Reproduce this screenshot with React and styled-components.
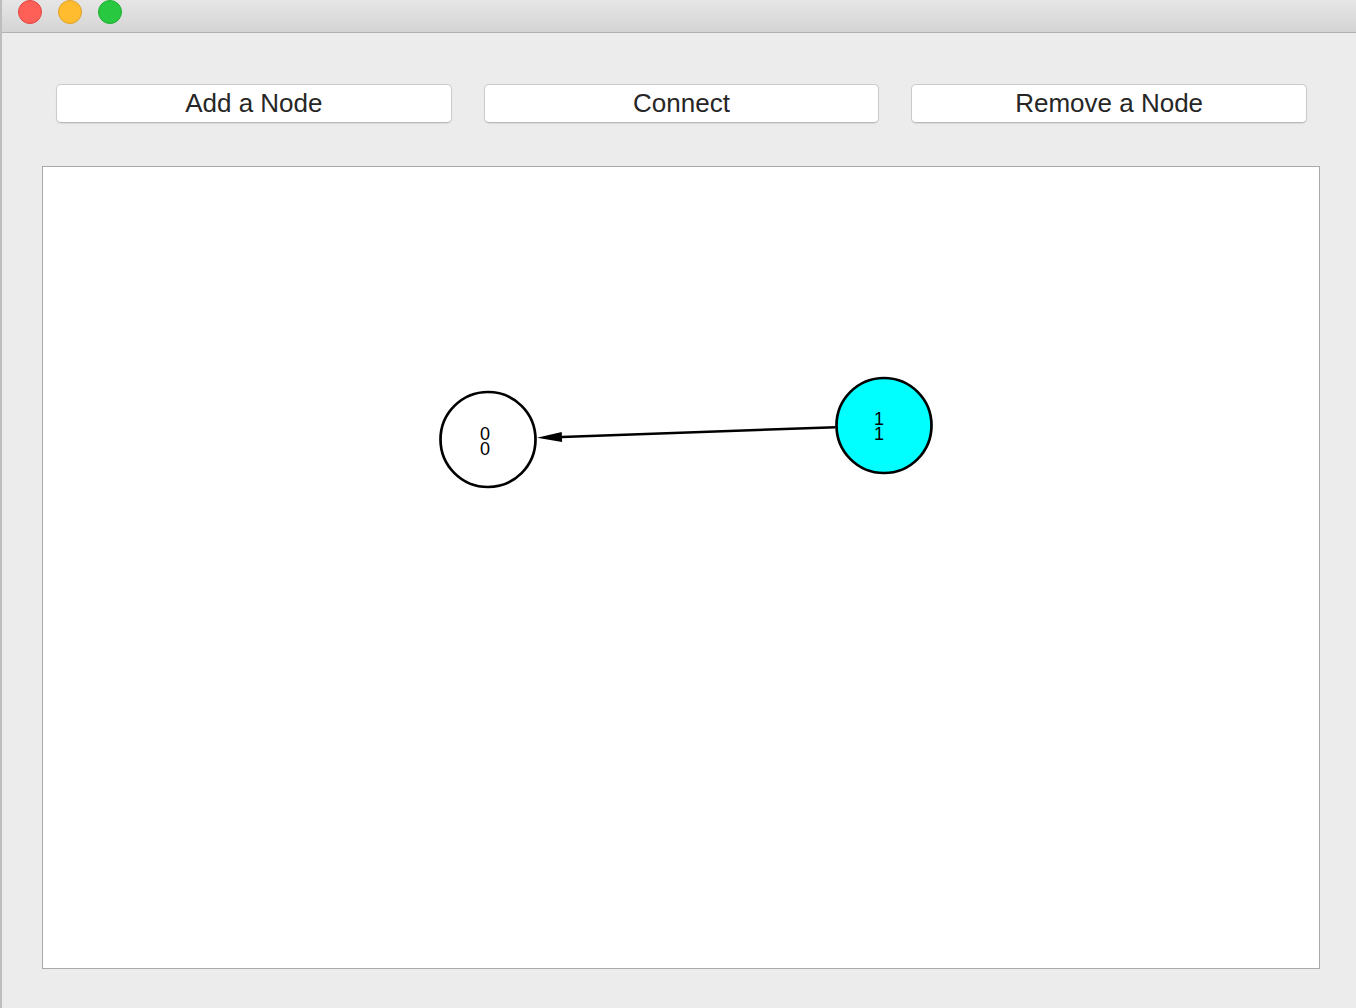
import React from "react";
import styled, { createGlobalStyle } from "styled-components";

const GlobalStyle = createGlobalStyle`
  html, body {
    margin: 0;
    padding: 0;
    height: 100%;
    background: #bdbdbd;
  }
  #root {
    height: 100%;
  }
`;

const Window = styled.div`
  height: 100%;
  margin-left: 2px;
  background-color: #ececec;
  display: flex;
  flex-direction: column;
  font-family: "Liberation Sans", Arial, sans-serif;
`;

const TitleBar = styled.div`
  height: 32px;
  flex-shrink: 0;
  background: linear-gradient(#e6e6e6, #d4d4d4);
  border-bottom: 1px solid #b1b1b1;
  display: flex;
  align-items: flex-start;
  gap: 16px;
  padding-left: 16px;
`;

const Light = styled.span`
  width: 22px;
  height: 22px;
  border-radius: 50%;
  background-color: ${(p) => p.$fill};
  border: 1px solid ${(p) => p.$edge};
`;

const Content = styled.div`
  flex: 1;
  display: flex;
  flex-direction: column;
  padding: 51px 36px 39px 40px;
  gap: 43px;
  min-height: 0;
`;

const ToolBar = styled.div`
  display: grid;
  grid-template-columns: repeat(3, 1fr);
  gap: 32px;
  margin: 0 13px 0 14px;
`;

const Button = styled.button`
  height: 39px;
  background-color: #ffffff;
  border: 1px solid #cbcbcb;
  border-bottom-color: #b9b9b9;
  border-radius: 5px;
  box-shadow: 0 1px 1px rgba(0, 0, 0, 0.08);
  color: #262626;
  font-family: "Liberation Sans", Arial, sans-serif;
  font-size: 26px;
  padding: 0;
  cursor: pointer;
`;

const Canvas = styled.div`
  flex: 1;
  background-color: #ffffff;
  border: 1px solid #a9a9a9;
  position: relative;
  overflow: hidden;
`;

const Graph = styled.svg`
  display: block;
  width: 100%;
  height: 100%;
`;

const nodes = [
  { id: 0, x: 445, y: 272.5, fill: "#ffffff", tx: 442, ty: 273 },
  { id: 1, x: 841, y: 258.5, fill: "#00ffff", tx: 836, ty: 258 },
];

const edges = [{ from: 1, to: 0 }];

const R = 47.5;

const Edge = ({ a, b }) => {
  const dx = b.x - a.x;
  const dy = b.y - a.y;
  const len = Math.hypot(dx, dy);
  const ux = dx / len;
  const uy = dy / len;
  const sx = a.x + ux * (R + 1);
  const sy = a.y + uy * (R + 1);
  const tx = b.x - ux * (R + 1.5);
  const ty = b.y - uy * (R + 1.5);
  const hx = tx - ux * 25;
  const hy = ty - uy * 25;
  const px = -uy * 5;
  const py = ux * 5;
  return (
    <g>
      <line x1={sx} y1={sy} x2={hx} y2={hy} stroke="#000" strokeWidth="2.5" />
      <polygon
        points={`${tx},${ty} ${hx + px},${hy + py} ${hx - px},${hy - py}`}
        fill="#000"
      />
    </g>
  );
};

const App = () => {
  const byId = Object.fromEntries(nodes.map((n) => [n.id, n]));
  return (
    <>
      <GlobalStyle />
      <Window>
        <TitleBar>
          <Light $fill="#fe5f57" $edge="#e2463f" />
          <Light $fill="#febc2e" $edge="#e0a028" />
          <Light $fill="#28c840" $edge="#1fae2f" />
        </TitleBar>
        <Content>
          <ToolBar>
            <Button>Add a Node</Button>
            <Button>Connect</Button>
            <Button>Remove a Node</Button>
          </ToolBar>
          <Canvas>
            <Graph>
              {edges.map((e, i) => (
                <Edge key={i} a={byId[e.from]} b={byId[e.to]} />
              ))}
              {nodes.map((n) => (
                <g key={n.id}>
                  <circle
                    cx={n.x}
                    cy={n.y}
                    r={R}
                    fill={n.fill}
                    stroke="#000"
                    strokeWidth="2.7"
                  />
                  <text
                    x={n.tx}
                    textAnchor="middle"
                    fontFamily="'Liberation Sans', Arial, sans-serif"
                    fontSize="18"
                    fill="#000"
                  >
                    <tspan x={n.tx} y={n.ty}>{n.id}</tspan>
                    <tspan x={n.tx} y={n.ty + 15}>{n.id}</tspan>
                  </text>
                </g>
              ))}
            </Graph>
          </Canvas>
        </Content>
      </Window>
    </>
  );
};

export default App;
